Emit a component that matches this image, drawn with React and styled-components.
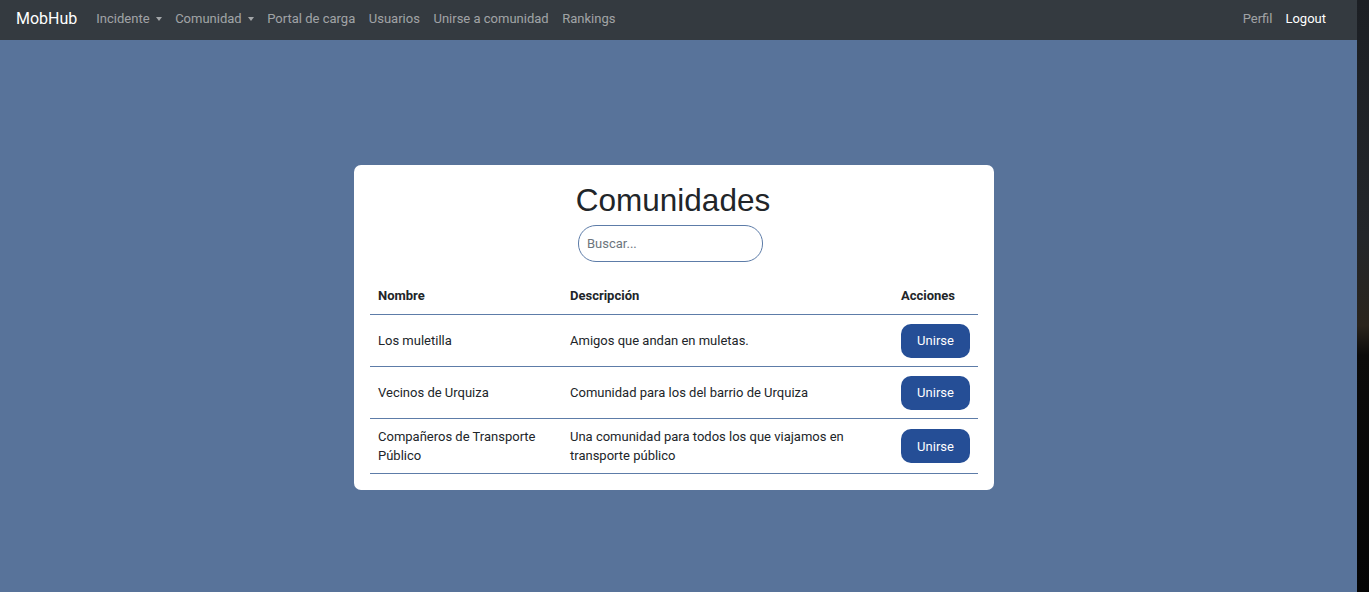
import React from "react";
import styled, { createGlobalStyle } from "styled-components";

const GlobalStyle = createGlobalStyle`
  html, body { margin: 0; padding: 0; height: 100%; overflow: hidden; }
  body { font-family: "Roboto", sans-serif; }
  #root { height: 100%; }
`;

const communities = [
  { name: "Los muletilla", desc: "Amigos que andan en muletas." },
  { name: "Vecinos de Urquiza", desc: "Comunidad para los del barrio de Urquiza" },
  {
    name: "Compañeros de Transporte Público",
    desc: "Una comunidad para todos los que viajamos en transporte público",
  },
];

const Screen = styled.div`
  display: flex;
  height: 592px;
  width: 1369px;
`;

const Page = styled.div`
  width: 1357px;
  height: 100%;
  background: #58739a;
  display: flex;
  flex-direction: column;
`;

const Strip = styled.div`
  flex: 1;
  background: linear-gradient(
    180deg,
    #1c1f24 0%,
    #23262a 40%,
    #2a241c 55%,
    #0c0b0a 60%,
    #050505 100%
  );
`;

const Navbar = styled.nav`
  height: 40px;
  box-sizing: border-box;
  padding: 0 16px 3px;
  background: #343a40;
  display: flex;
  align-items: center;
  font-size: 13px;
`;

const Brand = styled.span`
  color: #fff;
  font-size: 16px;
  margin-right: 19px;
`;

const NavLinks = styled.div`
  display: flex;
  gap: 13.6px;
  flex: 1;
`;

const NavLink = styled.span`
  color: ${(p) => (p.$active ? "#fff" : "rgba(255,255,255,0.55)")};
  display: inline-flex;
  align-items: center;
`;

const Caret = styled.span`
  display: inline-block;
  margin-left: 6px;
  border-top: 4px solid rgba(255, 255, 255, 0.55);
  border-left: 3.5px solid transparent;
  border-right: 3.5px solid transparent;
`;

const RightLinks = styled.div`
  display: flex;
  gap: 13px;
  margin-right: 15px;
`;

const Main = styled.main`
  flex: 1;
  display: flex;
  justify-content: center;
  padding-top: 125px;
  padding-right: 9px;
`;

const Card = styled.section`
  width: 640px;
  height: 325px;
  box-sizing: border-box;
  background: #fff;
  border-radius: 7px;
  padding: 16px 16px;
  display: flex;
  flex-direction: column;
  align-items: center;
`;

const Title = styled.h1`
  margin: 0 2px 0 0;
  font-family: "Liberation Sans", Arial, sans-serif;
  font-weight: 400;
  font-size: 31.5px;
  line-height: 38px;
  color: #212529;
`;

const Search = styled.input`
  margin: 6px 7px 0 0;
  width: 185px;
  height: 37px;
  box-sizing: border-box;
  border: 1px solid #5d7ca8;
  border-radius: 18px;
  padding: 0 8px;
  font-family: "Roboto", sans-serif;
  font-size: 13px;
  color: #333;
  outline: none;
  &::placeholder { color: #6c757d; }
`;

const Table = styled.table`
  margin-top: 17px;
  width: 100%;
  border-collapse: collapse;
  font-family: "Roboto", sans-serif;
  font-size: 13px;
  color: #212529;
`;

const Th = styled.th`
  text-align: left;
  font-weight: 700;
  padding: 9px 8px 11px;
  height: 14px;
  border-bottom: 1px solid #5d7ca8;
  width: ${(p) => p.$w || "auto"};
`;

const Td = styled.td`
  padding: 8px;
  line-height: 19px;
  border-bottom: 1px solid #5d7ca8;
  vertical-align: middle;
  height: 35px;
`;

const JoinButton = styled.button`
  background: #254e96;
  color: #fff;
  border: none;
  border-radius: 10px;
  width: 69px;
  height: 34px;
  font-family: "Roboto", sans-serif;
  font-size: 13px;
  cursor: pointer;
`;

export default function App() {
  return (
    <>
      <GlobalStyle />
      <Screen>
        <Page>
          <Navbar>
            <Brand>MobHub</Brand>
            <NavLinks>
              <NavLink>
                Incidente
                <Caret />
              </NavLink>
              <NavLink>
                Comunidad
                <Caret />
              </NavLink>
              <NavLink>Portal de carga</NavLink>
              <NavLink>Usuarios</NavLink>
              <NavLink>Unirse a comunidad</NavLink>
              <NavLink>Rankings</NavLink>
            </NavLinks>
            <RightLinks>
              <NavLink>Perfil</NavLink>
              <NavLink $active>Logout</NavLink>
            </RightLinks>
          </Navbar>
          <Main>
            <Card>
              <Title>Comunidades</Title>
              <Search placeholder="Buscar..." />
              <Table>
                <thead>
                  <tr>
                    <Th $w="176px">Nombre</Th>
                    <Th>Descripción</Th>
                    <Th $w="61px">Acciones</Th>
                  </tr>
                </thead>
                <tbody>
                  {communities.map((c) => (
                    <tr key={c.name}>
                      <Td>{c.name}</Td>
                      <Td>{c.desc}</Td>
                      <Td>
                        <JoinButton>Unirse</JoinButton>
                      </Td>
                    </tr>
                  ))}
                </tbody>
              </Table>
            </Card>
          </Main>
        </Page>
        <Strip />
      </Screen>
    </>
  );
}
